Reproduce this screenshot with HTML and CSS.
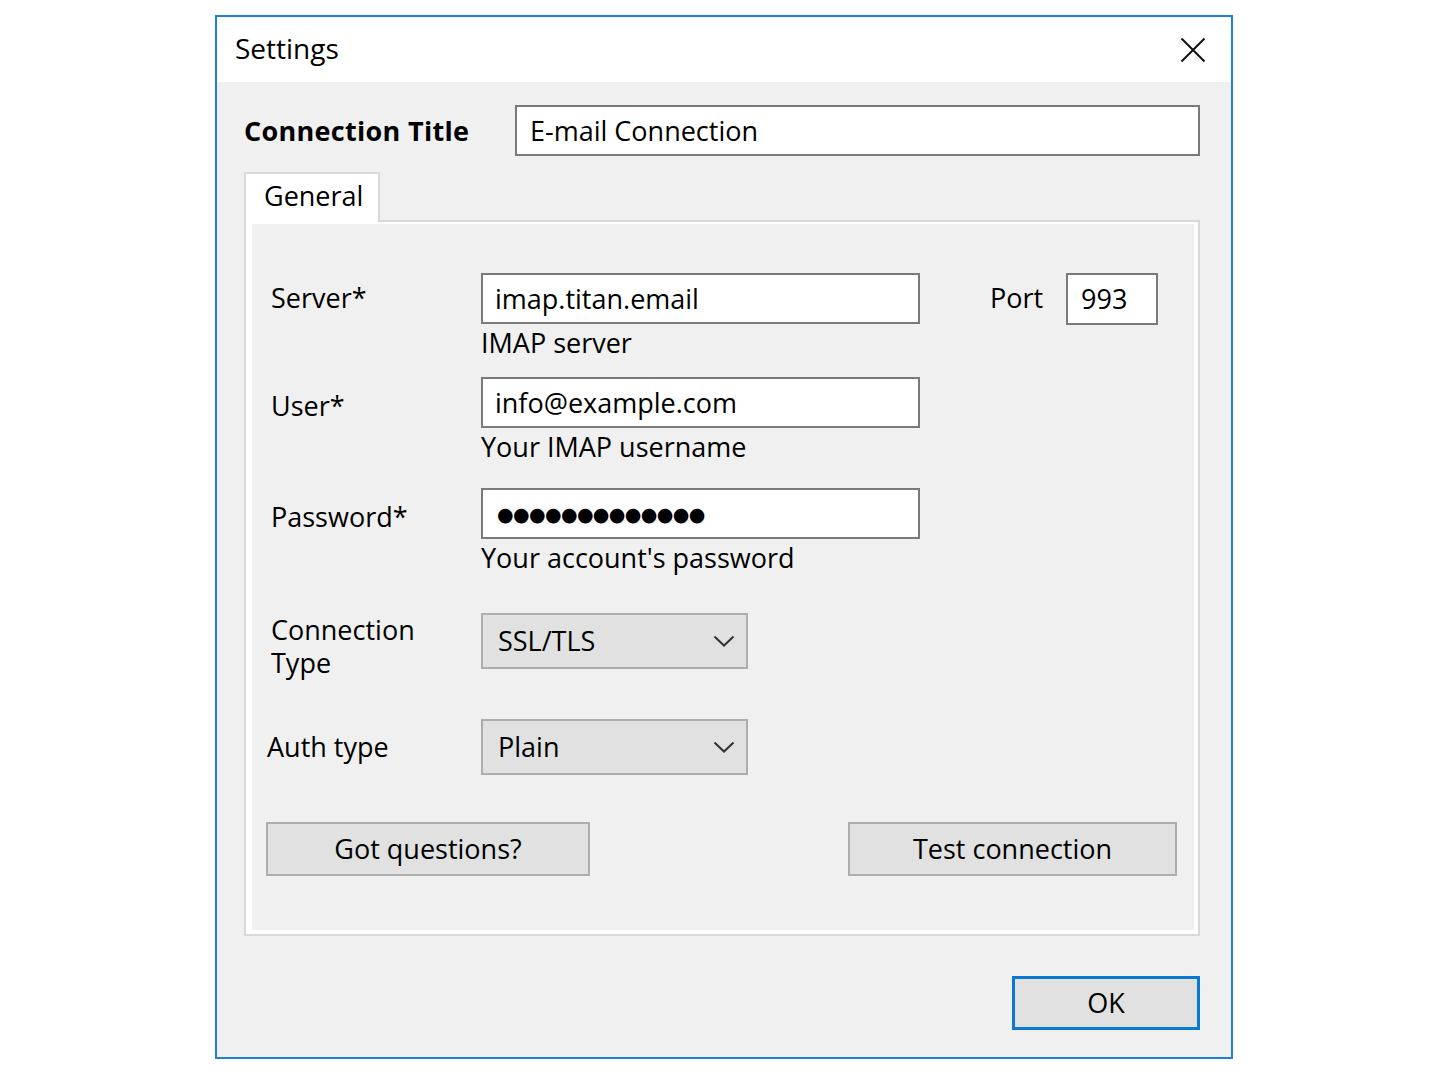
FILE: index.html
```html
<!DOCTYPE html>
<html lang="en">
<head>
<meta charset="utf-8">
<title>Settings</title>
<link rel="stylesheet" href="styles.css">
</head>
<body>
<div class="dialog">
  <div class="titlebar">
    <span class="title">Settings</span>
    <svg class="close" width="26" height="26" viewBox="0 0 26 26" aria-label="Close">
      <path d="M1.5 1.5L24.5 24.5M24.5 1.5L1.5 24.5" stroke="#111" stroke-width="2" fill="none"/>
    </svg>
  </div>
  <div class="content">
    <div class="conn-row">
      <div class="conn-label">Connection Title</div>
      <div class="field conn-field">E-mail Connection</div>
    </div>
    <div class="tabs"><div class="tab">General</div></div>
    <div class="panel">
      <div class="panel-inner">
        <div class="row">
          <div class="label label-server">Server*</div>
          <div class="fieldcol">
            <div class="field">imap.titan.email</div>
            <div class="hint">IMAP server</div>
          </div>
          <div class="port-label">Port</div>
          <div class="field port-field">993</div>
        </div>
        <div class="row row-user">
          <div class="label label-mid">User*</div>
          <div class="fieldcol">
            <div class="field">info@example.com</div>
            <div class="hint">Your IMAP username</div>
          </div>
        </div>
        <div class="row row-pass">
          <div class="label label-mid">Password*</div>
          <div class="fieldcol">
            <div class="field"><span class="dots">●●●●●●●●●●●●●</span></div>
            <div class="hint">Your account's password</div>
          </div>
        </div>
        <div class="row row-conn">
          <div class="label label-two"><div>Connection</div><div>Type</div></div>
          <div class="select">
            <span>SSL/TLS</span>
            <svg class="chev" width="22" height="12" viewBox="0 0 22 12"><path d="M1.5 1.5L11 10.5L20.5 1.5" stroke="#333" stroke-width="2" fill="none"/></svg>
          </div>
        </div>
        <div class="row row-auth">
          <div class="label label-auth">Auth type</div>
          <div class="select">
            <span>Plain</span>
            <svg class="chev" width="22" height="12" viewBox="0 0 22 12"><path d="M1.5 1.5L11 10.5L20.5 1.5" stroke="#333" stroke-width="2" fill="none"/></svg>
          </div>
        </div>
        <div class="buttons">
          <button class="btn btn-q">Got questions?</button>
          <button class="btn btn-test">Test connection</button>
        </div>
      </div>
    </div>
    <div class="footer">
      <button class="btn ok">OK</button>
    </div>
  </div>
</div>
</body>
</html>
```
FILE: styles.css
```css
* { box-sizing: border-box; }

body {
  margin: 0;
  background: #ffffff;
  font-family: "Open Sans", "Noto Sans", sans-serif;
  font-size: 27px;
  color: #000;
}

.dialog {
  margin: 15px 0 0 215px;
  width: 1018px;
  height: 1044px;
  border: 2px solid #1c80d8;
  display: flex;
  flex-direction: column;
}

.titlebar {
  height: 65px;
  flex: none;
  background: #fff;
  display: flex;
  align-items: center;
  justify-content: space-between;
  padding: 0 25px 0 18px;
}

.title { font-size: 28px; line-height: 34px; margin-top: -3px; }

.close { display: block; }

.content {
  flex: 1;
  background: #f0f0f0;
  padding: 23px 31px 27px 27px;
  display: flex;
  flex-direction: column;
}

.conn-row { display: flex; align-items: center; height: 51px; }

.conn-label { width: 271px; font-weight: 700; line-height: 34px; letter-spacing: 0.3px; }

.field {
  background: #fff;
  border: 2px solid #7a7a7a;
  height: 51px;
  display: flex;
  align-items: center;
  padding-left: 12px;
  line-height: 34px;
  white-space: nowrap;
}

.conn-field { flex: 1; padding-left: 13px; }

.tabs { margin-top: 16px; display: flex; }

.tab {
  position: relative;
  z-index: 1;
  width: 136px;
  height: 50px;
  background: #fff;
  border: 2px solid #d9d9d9;
  border-bottom: none;
  padding: 5px 0 0 18px;
  line-height: 34px;
}

.panel {
  margin-top: -2px;
  height: 716px;
  border: 2px solid #d9d9d9;
  background: #fff;
  padding: 2px 4px 4px 6px;
}

.panel-inner {
  height: 100%;
  background: #f0f0f0;
  padding: 49px 0 0 19px;
  display: flex;
  flex-direction: column;
}

.row { display: flex; align-items: flex-start; }

.label { width: 210px; line-height: 34px; flex: none; }
.label-server { margin-top: 8px; }
.label-mid { margin-top: 12px; }
.label-two { line-height: 33px; }
.label-auth { margin-left: -4px; width: 214px; }

.fieldcol { width: 439px; display: flex; flex-direction: column; }

.hint { margin-top: 2px; line-height: 34px; white-space: nowrap; }

.row-user { margin-top: 17px; }
.row-pass { margin-top: 24px; }
.row-conn { margin-top: 38px; }
.row-auth { margin-top: 40px; align-items: center; }

.dots {
  font-family: "DejaVu Sans", sans-serif;
  font-size: 19px;
  letter-spacing: -0.6px;
  padding-left: 2px;
}

.port-label { margin-left: 70px; width: 76px; margin-top: 8px; line-height: 34px; }
.port-field { width: 92px; height: 52px; padding-left: 13px; }

.select {
  width: 267px;
  height: 56px;
  background: #e1e1e1;
  border: 2px solid #adadad;
  display: flex;
  align-items: center;
  justify-content: space-between;
  padding: 0 11px 0 15px;
  line-height: 34px;
}

.chev { display: block; }

.buttons {
  margin-top: 47px;
  margin-left: -5px;
  padding-right: 17px;
  display: flex;
  justify-content: space-between;
}

.btn {
  height: 54px;
  background: #e1e1e1;
  border: 2px solid #adadad;
  font: inherit;
  color: #000;
  padding: 0;
  line-height: 34px;
  display: flex;
  align-items: center;
  justify-content: center;
}

.btn-q { width: 324px; }
.btn-test { width: 329px; }

.footer { margin-top: 40px; display: flex; justify-content: flex-end; }

.ok { width: 188px; border: 3px solid #0a78d6; }
```
